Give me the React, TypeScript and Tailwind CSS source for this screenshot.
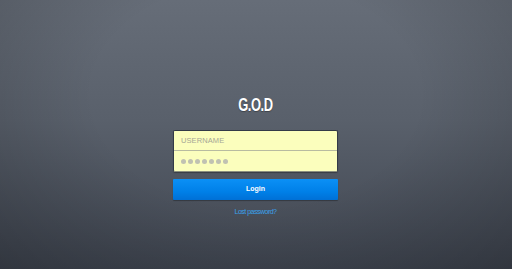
import React from 'react';

export default function App() {
  return (
    <div className="relative w-full h-[269px] overflow-hidden bg-[linear-gradient(180deg,#666d78_0%,#59606b_45%,#3f4550_100%)] font-['Liberation_Sans',Arial,sans-serif]">
      {/* Vignette */}
      <div className="absolute inset-0 pointer-events-none bg-[radial-gradient(ellipse_at_50%_35%,rgba(0,0,0,0)_45%,rgba(0,0,0,0.22)_100%)]" />

      <div className="relative flex flex-col items-center pt-[92px] pr-px">
        <h1 className="font-bold text-[19px] leading-[25px] text-white tracking-[-0.6px] scale-x-[0.68] [text-shadow:0_1px_1px_rgba(0,0,0,0.3)]">
          G.O.D
        </h1>

        <div className="mt-[13px] w-[165px] rounded-[2px] bg-[#fbfebd] border border-[#333a47] border-b-[#8c8f80] shadow-[0_1px_1px_rgba(0,0,0,0.3)]">
          <div className="h-[20px] flex items-center px-[7px] border-b border-[#b8bba0]">
            <span className="text-[7.5px] tracking-[0.1px] text-[#a6a796]">USERNAME</span>
          </div>
          <div className="h-[20px] flex items-center gap-[2px] px-[7px]">
            {[0, 1, 2, 3, 4, 5, 6].map((i) => (
              <span key={i} className="w-[5px] h-[5px] rounded-full bg-[#c0c1b2]" />
            ))}
          </div>
        </div>

        <button className="mt-[7px] w-[165px] h-[21px] rounded-[1px] bg-[linear-gradient(180deg,#0b90f6_0%,#0080e8_60%,#0070d6_100%)] shadow-[0_1px_1px_rgba(0,0,0,0.3)] text-white text-[7px] font-bold flex items-center justify-center">
          Login
        </button>

        <a href="#" className="mt-[7px] text-[7px] tracking-[-0.5px] text-[#3aa2ec]">
          Lost password?
        </a>
      </div>
    </div>
  );
}
